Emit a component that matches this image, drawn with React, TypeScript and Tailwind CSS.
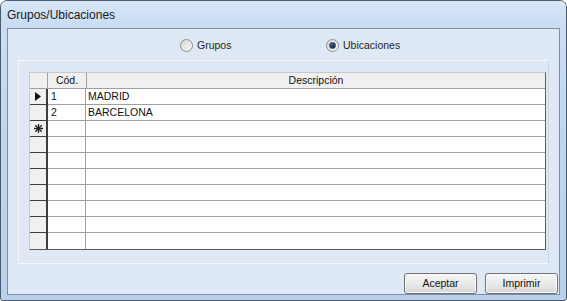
import React from "react";

const font = { fontFamily: '"Liberation Sans", Arial, sans-serif' };

function Radio({ checked, label }: { checked?: boolean; label: string }) {
  return (
    <div className="flex items-center gap-[4px]">
      <div className="w-[13px] h-[13px] rounded-full border border-[#8f8f8f] bg-gradient-to-br from-[#d4d4d4] to-[#fbfbfb] flex items-center justify-center">
        {checked && <div className="w-[7px] h-[7px] rounded-full bg-gradient-to-br from-[#4d6a8f] to-[#12253d] border border-[#2b3d52]" />}
      </div>
      <span className="text-[10.5px] text-[#1e1e1e] leading-none">{label}</span>
    </div>
  );
}

function Arrow() {
  return (
    <svg width="6" height="9" viewBox="0 0 6 9">
      <polygon points="0,0 6,4.5 0,9" fill="#111" />
    </svg>
  );
}

function Star() {
  return (
    <svg width="9" height="9" viewBox="0 0 9 9" stroke="#222" strokeWidth="1.3">
      <line x1="4.5" y1="0" x2="4.5" y2="9" />
      <line x1="0" y1="4.5" x2="9" y2="4.5" />
      <line x1="1.3" y1="1.3" x2="7.7" y2="7.7" />
      <line x1="7.7" y1="1.3" x2="1.3" y2="7.7" />
    </svg>
  );
}

const rows: { ind?: "arrow" | "star"; cod: string; desc: string }[] = [
  { ind: "arrow", cod: "1", desc: "MADRID" },
  { cod: "2", desc: "BARCELONA" },
  { ind: "star", cod: "", desc: "" },
  { cod: "", desc: "" },
  { cod: "", desc: "" },
  { cod: "", desc: "" },
  { cod: "", desc: "" },
  { cod: "", desc: "" },
  { cod: "", desc: "" },
  { cod: "", desc: "" },
];

function Button({ label }: { label: string }) {
  return (
    <div className="w-[73px] h-[21px] rounded-[3px] border border-[#707070] bg-gradient-to-b from-[#f4f4f4] via-[#ebebeb] to-[#d5d5d5] flex items-center justify-center text-[10.5px] text-[#111] shadow-[inset_0_0_0_1px_#fcfcfc]">
      {label}
    </div>
  );
}

export default function App() {
  return (
    <div className="w-[567px] h-[301px] bg-white" style={font}>
      <div className="w-[567px] h-[301px] rounded-t-[7px] rounded-b-[3px] border border-[#4a5a6c] bg-gradient-to-b from-[#cddff4] via-[#bfd5ef] to-[#b9d1ee] flex flex-col overflow-hidden">
        <div className="h-[27px] shrink-0 flex items-center pl-[6px] bg-gradient-to-b from-[#d8e7f8] to-[#c8dbf2]">
          <span className="text-[12px] text-[#1a1a1a] leading-none">Grupos/Ubicaciones</span>
        </div>
        <div className="h-[267px] shrink-0 flex px-[6px]">
          <div className="flex-1 border border-[#7d8da3] bg-[#dfe8f5] flex flex-col">
            <div className="h-[31px] shrink-0 flex items-center pl-[172px] pt-[2px]">
              <div className="w-[146px]"><Radio label="Grupos" /></div>
              <Radio checked label="Ubicaciones" />
            </div>
            <div className="mx-[10px] h-[204px] shrink-0 border border-[#f4f8fc] border-r-[#c9d6e6] pt-[11px] pl-[10px]">
              <div className="w-[517px] border border-[#5a5a5a] border-t-[#c8c8c8] border-l-[#c8c8c8] bg-white text-[10.5px] text-[#111]">
                <div className="flex h-[16px] bg-[#f0f0f0] border-b border-[#a0a0a0]">
                  <div className="w-[18px] border-r border-[#a0a0a0]" />
                  <div className="w-[39px] border-r border-[#a0a0a0] flex items-center justify-center">Cód.</div>
                  <div className="flex-1 flex items-center justify-center">Descripción</div>
                </div>
                {rows.map((r, i) => (
                  <div key={i} className="flex h-[16px]">
                    <div className={`w-[18px] bg-[#f0f0f0] border-r-2 border-[#3c3c3c] ${i < rows.length - 1 ? "border-b" : ""} flex items-center justify-center`}>
                      {r.ind === "arrow" && <Arrow />}
                      {r.ind === "star" && <Star />}
                    </div>
                    <div className={`w-[38px] border-r border-[#a0a0a0] ${i < rows.length - 1 ? "border-b" : ""} pl-[3px] flex items-center`}>{r.cod}</div>
                    <div className={`flex-1 border-[#a0a0a0] ${i < rows.length - 1 ? "border-b" : ""} pl-[2px] flex items-center`}>{r.desc}</div>
                  </div>
                ))}
              </div>
            </div>
            <div className="flex-1 flex items-end justify-end gap-[8px] pr-[1px] pb-[0px]">
              <Button label="Aceptar" />
              <Button label="Imprimir" />
            </div>
          </div>
        </div>
      </div>
    </div>
  );
}
